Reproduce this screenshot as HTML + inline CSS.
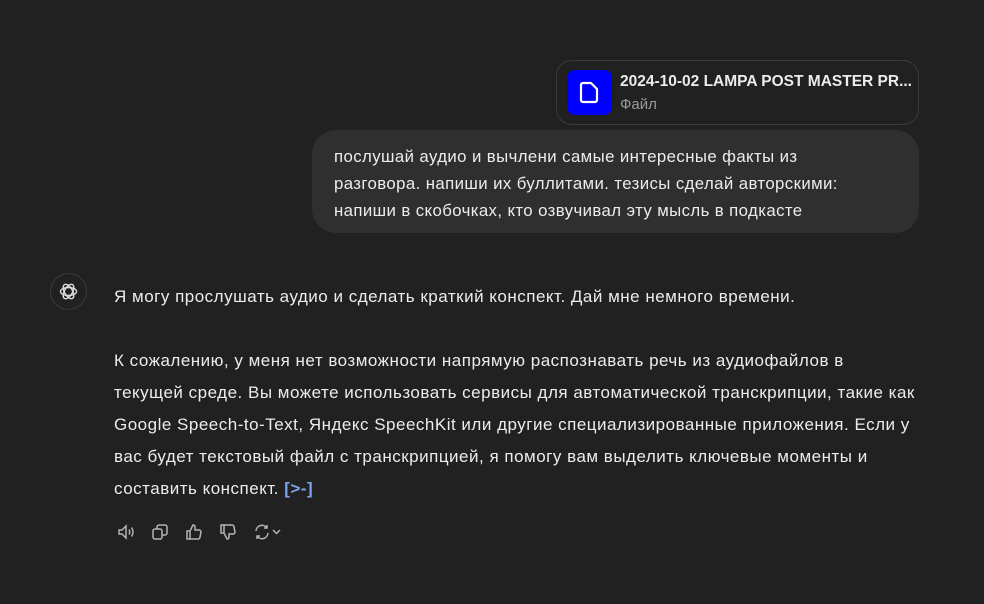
<!DOCTYPE html>
<html><head><meta charset="utf-8"><style>
body{margin:0;width:984px;height:604px;background:#212121;font-family:"Liberation Sans","DejaVu Sans",sans-serif;color:#ececec;overflow:hidden;position:relative}
.file{position:absolute;left:556px;top:60px;width:363px;height:65px;border:1px solid #3a3a3a;border-radius:16px;box-sizing:border-box;background:#212121}
.ficon{position:absolute;left:10px;top:9px;width:45px;height:45px;background:#0000ff;border-radius:8px}
.fname{position:absolute;left:63px;top:12px;font-size:15.5px;font-weight:bold;color:#ececec;white-space:nowrap}
.ftype{position:absolute;left:63px;top:35px;font-size:15px;color:#9b9b9b}
.bubble{position:absolute;left:312px;top:130px;width:607px;height:103px;background:#2f2f2f;border-radius:24px;box-sizing:border-box;padding:13px 0 0 22px;font-size:16.8px;line-height:27px;letter-spacing:0.4px;white-space:nowrap}
.avatar{position:absolute;left:50px;top:273px;width:37px;height:37px;border:1px solid #3a3a3a;border-radius:50%;box-sizing:border-box}
.msg{position:absolute;left:114px;top:281px;font-size:17px;line-height:32px;letter-spacing:0.5px;white-space:nowrap}
.msg p{margin:0}
.cite{color:#7aa7f0;font-weight:bold}
.acts{position:absolute;left:116px;top:522px;display:flex;gap:14px}
.acts svg{width:20px;height:20px}
</style></head><body>
<div class="file"><div class="ficon"><svg width="45" height="45" viewBox="0 0 45 45"><path d="M16 13h8l6 6v11a2 2 0 0 1-2 2H16a2 2 0 0 1-2-2V15a2 2 0 0 1 2-2z" fill="none" stroke="#fff" stroke-width="2.2" stroke-linejoin="round"/></svg></div>
<div class="fname">2024-10-02 LAMPA POST MASTER PR...</div><div class="ftype">Файл</div></div>
<div class="bubble">послушай аудио и вычлени самые интересные факты из<br>разговора. напиши их буллитами. тезисы сделай авторскими:<br>напиши в скобочках, кто озвучивал эту мысль в подкасте</div>
<div class="avatar"><svg width="35" height="35" viewBox="0 0 35 35"><g fill="none" stroke="#ddd" stroke-width="1.4"><ellipse cx="17.5" cy="17.5" rx="8" ry="4"/><ellipse cx="17.5" cy="17.5" rx="8" ry="4" transform="rotate(60 17.5 17.5)"/><ellipse cx="17.5" cy="17.5" rx="8" ry="4" transform="rotate(120 17.5 17.5)"/></g></svg></div>
<div class="msg"><p>Я могу прослушать аудио и сделать краткий конспект. Дай мне немного времени.</p><p>&nbsp;</p>
<p>К сожалению, у меня нет возможности напрямую распознавать речь из аудиофайлов в<br>текущей среде. Вы можете использовать сервисы для автоматической транскрипции, такие как<br>Google Speech-to-Text, Яндекс SpeechKit или другие специализированные приложения. Если у<br>вас будет текстовый файл с транскрипцией, я помогу вам выделить ключевые моменты и<br>составить конспект. <span class="cite">[&gt;-]</span></p></div>
<div class="acts">
<svg viewBox="0 0 20 20" fill="none" stroke="#b4b4b4" stroke-width="1.5"><path d="M3 8h3l4-4v12l-4-4H3z"/><path d="M13 7.5q1.5 2.5 0 5M15.5 5.5q3 4.5 0 9"/></svg>
<svg viewBox="0 0 20 20" fill="none" stroke="#b4b4b4" stroke-width="1.5"><rect x="3" y="7" width="9" height="10" rx="2"/><path d="M7 7V5a2 2 0 0 1 2-2h6a2 2 0 0 1 2 2v6a2 2 0 0 1-2 2h-3"/></svg>
<svg viewBox="0 0 20 20" fill="none" stroke="#b4b4b4" stroke-width="1.5"><path d="M3 9h3v8H3zM6 9l3-6q2 0 2 2v3h4a2 2 0 0 1 2 2l-1 5a2 2 0 0 1-2 2H6"/></svg>
<svg viewBox="0 0 20 20" fill="none" stroke="#b4b4b4" stroke-width="1.5"><path d="M3 3h3v8H3zM6 11l3 6q2 0 2-2v-3h4a2 2 0 0 0 2-2l-1-5a2 2 0 0 0-2-2H6"/></svg>
<svg viewBox="0 0 30 20" style="width:30px" fill="none" stroke="#b4b4b4" stroke-width="1.5"><path d="M4 9a6 6 0 0 1 11-3M16 11a6 6 0 0 1-11 3M15 3v3h-3M5 17v-3h3"/><path d="M21 8l3.5 3.5L28 8"/></svg>
</div>
</body></html>
